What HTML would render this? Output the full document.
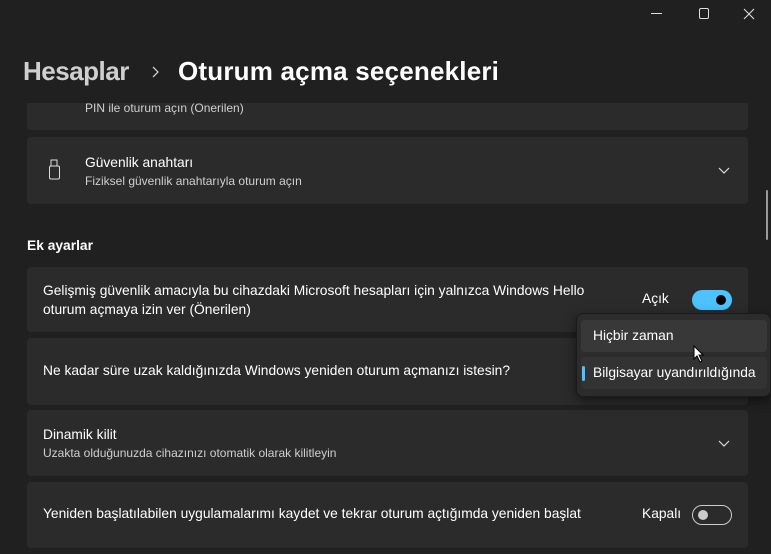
<!DOCTYPE html>
<html><head><meta charset="utf-8"><style>
*{margin:0;padding:0;box-sizing:border-box}
body{width:771px;height:554px;background:#202020;font-family:"Segoe UI","Liberation Sans",sans-serif;color:#fff;position:relative;overflow:hidden}
.abs{position:absolute}
.card{position:absolute;left:27px;width:721px;background:#2b2b2b;border-radius:4px}
.t{position:absolute;font-size:13.8px;color:#fff;white-space:nowrap}
.s{position:absolute;font-size:12px;color:#cfcfcf;white-space:nowrap}
</style></head><body>
<div class="abs" style="left:651px;top:13px;width:11px;height:1px;background:#ddd"></div>
<div class="abs" style="left:699px;top:8px;width:10px;height:11px;border:1px solid #ddd;border-radius:2px"></div>
<svg class="abs" style="left:743px;top:8px" width="12" height="12"><path d="M1 1L11 11M11 1L1 11" stroke="#ddd" stroke-width="1.1"/></svg>
<div class="abs" style="left:23px;top:56px;font-size:26px;color:#cfcfcf;font-weight:600;letter-spacing:-0.5px">Hesaplar</div>
<svg class="abs" style="left:151px;top:66px" width="10" height="12"><path d="M2 1L7 6L2 11" stroke="#ccc" stroke-width="1.3" fill="none"/></svg>
<div class="abs" style="left:178px;top:56px;font-size:26px;font-weight:600;letter-spacing:0.2px">Oturum açma seçenekleri</div>
<div class="abs" style="left:0;top:103px;width:771px;height:451px;overflow:hidden">
 <div class="card" style="top:-30px;height:57px"><div class="abs" style="left:26px;top:24px;width:3px;height:3px;background:#ddd;border-radius:50%"></div><div class="s" style="left:58px;top:28px">PIN ile oturum açın (Önerilen)</div></div>
 <div class="card" style="top:34px;height:67px">
  <svg class="abs" style="left:21px;top:22px" width="14" height="24"><rect x="3" y="1" width="6" height="6" fill="none" stroke="#ddd"/><rect x="1.5" y="7" width="10" height="13" rx="1.5" fill="none" stroke="#ddd"/></svg>
  <div class="t" style="left:58px;top:18px">Güvenlik anahtarı</div><div class="s" style="left:58px;top:37px">Fiziksel güvenlik anahtarıyla oturum açın</div>
  <svg class="abs" style="left:691px;top:30px" width="12" height="8"><path d="M1 1L6 6L11 1" stroke="#ddd" stroke-width="1.2" fill="none"/></svg></div>
 <div class="abs" style="left:27px;top:135px;font-size:13.8px;font-weight:600">Ek ayarlar</div>
 <div class="card" style="top:164px;height:65px">
  <div class="t" style="left:16px;top:14px;line-height:19px">Gelişmiş güvenlik amacıyla bu cihazdaki Microsoft hesapları için yalnızca Windows Hello<br>oturum açmaya izin ver (Önerilen)</div>
  <div class="t" style="left:615px;top:24px">Açık</div>
  <div class="abs" style="left:665px;top:23px;width:40px;height:20px;border-radius:10px;background:#4cc2ff"><div class="abs" style="left:24px;top:5px;width:10px;height:10px;border-radius:50%;background:#000"></div></div></div>
 <div class="card" style="top:235px;height:67px"><div class="t" style="left:16px;top:25px">Ne kadar süre uzak kaldığınızda Windows yeniden oturum açmanızı istesin?</div></div>
 <div class="card" style="top:307px;height:66px">
  <div class="t" style="left:16px;top:17px">Dinamik kilit</div><div class="s" style="left:16px;top:36px">Uzakta olduğunuzda cihazınızı otomatik olarak kilitleyin</div>
  <svg class="abs" style="left:691px;top:30px" width="12" height="8"><path d="M1 1L6 6L11 1" stroke="#ddd" stroke-width="1.2" fill="none"/></svg></div>
 <div class="card" style="top:379px;height:66px">
  <div class="t" style="left:16px;top:24px">Yeniden başlatılabilen uygulamalarımı kaydet ve tekrar oturum açtığımda yeniden başlat</div>
  <div class="t" style="left:615px;top:24px">Kapalı</div>
  <div class="abs" style="left:665px;top:23px;width:40px;height:20px;border-radius:10px;border:1px solid #ccc"><div class="abs" style="left:5px;top:4px;width:10px;height:10px;border-radius:50%;background:#ccc"></div></div></div>
</div>
<div class="abs" style="left:766px;top:190px;width:2px;height:50px;background:#9a9a9a;border-radius:1px"></div>
<div class="abs" style="left:576px;top:313px;width:195px;height:84px;background:#2c2c2c;border:1px solid #1a1a1a;border-radius:7px;box-shadow:0 4px 12px rgba(0,0,0,.5)">
 <div class="abs" style="left:4px;top:6px;width:186px;height:32px;background:#383838;border-radius:4px"></div>
 <div class="t" style="left:16px;top:14px">Hiçbir zaman</div>
 <div class="abs" style="left:4px;top:43px;width:186px;height:32px;background:#333;border-radius:4px"></div>
 <div class="abs" style="left:5px;top:52px;width:3px;height:15px;background:#4cc2ff;border-radius:2px"></div>
 <div class="t" style="left:16px;top:51px">Bilgisayar uyandırıldığında</div>
</div>
<svg class="abs" style="left:693px;top:345px" width="12" height="18"><path d="M1 1L1 14L4 11L7 17L9 16L6 10L10 10Z" fill="#fff" stroke="#000" stroke-width="1"/></svg>
</body></html>
